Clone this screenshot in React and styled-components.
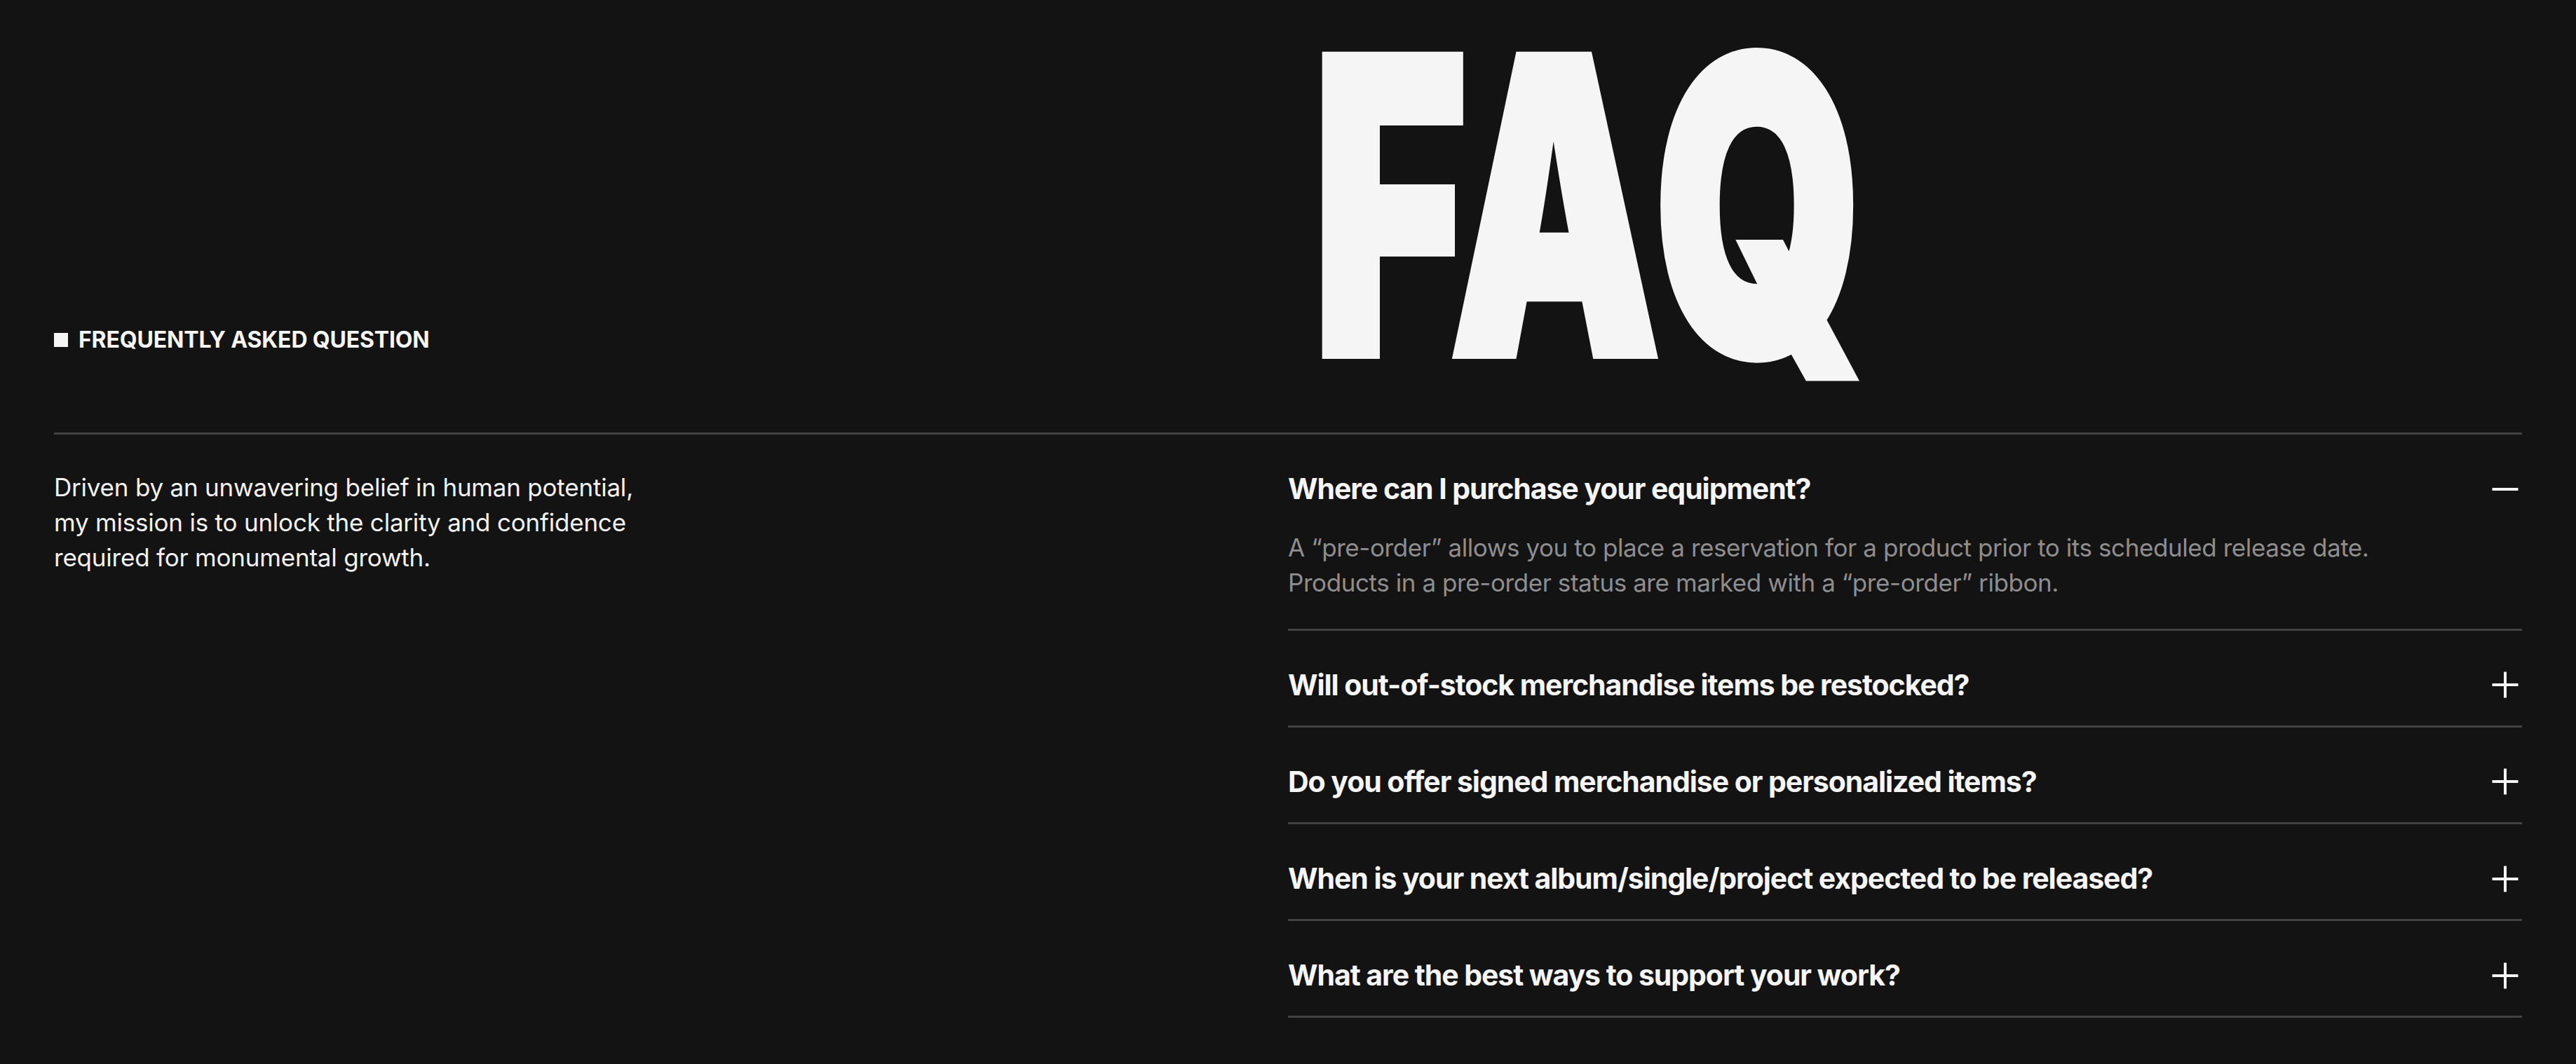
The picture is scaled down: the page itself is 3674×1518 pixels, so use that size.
import React, { useState } from "react";
import styled, { createGlobalStyle } from "styled-components";

const GlobalStyle = createGlobalStyle`
  html, body {
    margin: 0;
    background: #131313;
    color: #f5f5f5;
    font-family: Inter, "Noto Sans", sans-serif;
  }
`;

const Section = styled.section`
  min-height: 100vh;
  padding: 0 77px;
  box-sizing: border-box;
`;

const Header = styled.header`
  display: grid;
  grid-template-columns: 1fr 1fr;
  align-items: end;
  padding-top: 29px;
  padding-bottom: 61px;
  border-bottom: 3px solid #424242;
`;

const Eyebrow = styled.div`
  display: flex;
  align-items: center;
  gap: 15px;
  padding-bottom: 52px;
  font-size: 32px;
  font-weight: 700;
  letter-spacing: -0.005em;
  line-height: 1.2;
  text-transform: uppercase;

  &::before {
    content: "";
    width: 20px;
    height: 20px;
    background: #f5f5f5;
  }
`;

/* heavy display word, squeezed horizontally into a condensed shape */
const Title = styled.h1`
  margin: 0;
  padding-left: 54px;
  font-size: 586px;
  font-weight: 900;
  line-height: 0.9;
  letter-spacing: 0.025em;
  -webkit-text-stroke: 12px #f5f5f5;
  transform: scaleX(0.645);
  transform-origin: left bottom;
  white-space: nowrap;
`;

const Body = styled.div`
  display: grid;
  grid-template-columns: 1fr 1fr;
`;

const Intro = styled.p`
  margin: 0;
  padding-top: 50px;
  font-size: 35px;
  line-height: 50px;
  letter-spacing: -0.006em;
  color: #f2f2f2;
`;

const List = styled.div`
  display: flex;
  flex-direction: column;
`;

const Item = styled.div`
  padding: 53px 0 33px;
  border-bottom: 3px solid #424242;
`;

const Trigger = styled.button`
  display: flex;
  width: 100%;
  align-items: center;
  justify-content: space-between;
  gap: 40px;
  padding: 0;
  border: 0;
  background: none;
  color: inherit;
  font: inherit;
  text-align: left;
  cursor: pointer;
`;

const Question = styled.span`
  font-size: 41px;
  font-weight: 700;
  line-height: 1.2;
  letter-spacing: -0.026em;
`;

const Answer = styled.p`
  margin: 33px 0 8px;
  font-size: 35px;
  line-height: 50px;
  letter-spacing: -0.012em;
  color: #8e8e8e;
`;

const IconBox = styled.svg`
  flex: none;
  width: 48px;
  height: 48px;
`;

const ToggleIcon = ({ open }) => (
  <IconBox viewBox="0 0 48 48" fill="none" stroke="#f5f5f5" strokeWidth="4">
    <line x1="5.5" y1="24" x2="42.5" y2="24" />
    {!open && <line x1="24" y1="5.5" x2="24" y2="42.5" />}
  </IconBox>
);

const faqs = [
  {
    q: "Where can I purchase your equipment?",
    a: [
      "A \u201Cpre-order\u201D allows you to place a reservation for a product prior to its scheduled release date.",
      "Products in a pre-order status are marked with a \u201Cpre-order\u201D ribbon.",
    ],
  },
  { q: "Will out-of-stock merchandise items be restocked?", a: [] },
  { q: "Do you offer signed merchandise or personalized items?", a: [] },
  { q: "When is your next album/single/project expected to be released?", a: [] },
  { q: "What are the best ways to support your work?", a: [] },
];

export default function App() {
  const [open, setOpen] = useState(0);

  return (
    <>
      <GlobalStyle />
      <Section>
        <Header>
          <Eyebrow>Frequently asked question</Eyebrow>
          <Title>FAQ</Title>
        </Header>
        <Body>
          <Intro>
            Driven by an unwavering belief in human potential,
            <br />
            my mission is to unlock the clarity and confidence
            <br />
            required for monumental growth.
          </Intro>
          <List>
            {faqs.map((item, i) => (
              <Item key={item.q}>
                <Trigger onClick={() => setOpen(open === i ? -1 : i)}>
                  <Question>{item.q}</Question>
                  <ToggleIcon open={open === i} />
                </Trigger>
                {open === i && item.a.length > 0 && (
                  <Answer>
                    {item.a[0]}
                    <br />
                    {item.a[1]}
                  </Answer>
                )}
              </Item>
            ))}
          </List>
        </Body>
      </Section>
    </>
  );
}
